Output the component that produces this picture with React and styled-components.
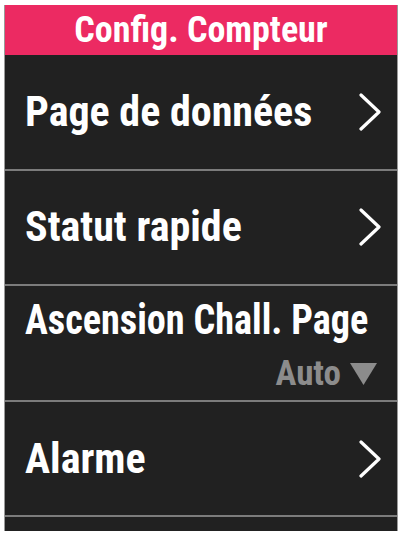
import React from 'react';
import styled, { createGlobalStyle } from 'styled-components';

const GlobalStyle = createGlobalStyle`
  body {
    margin: 0;
    background: #ffffff;
    font-family: "Roboto Condensed", Roboto, sans-serif;
  }
`;

const Screen = styled.div`
  margin: 5px 5px 0 4px;
  width: 394px;
  height: 526px;
  background: #212121;
  border-left: 1px solid #9a9a9a;
  border-right: 1px solid #9a9a9a;
  box-sizing: border-box;
  overflow: hidden;
  display: flex;
  flex-direction: column;
`;

const Header = styled.div`
  height: 50px;
  background: #ec2a62;
  color: #fff;
  font-size: 36px;
  font-weight: 700;
  display: flex;
  align-items: center;
  justify-content: center;
  flex-shrink: 0;
`;

const Row = styled.div`
  height: 115.6px;
  flex-shrink: 0;
  box-sizing: border-box;
  border-bottom: 2px solid #7c7c7c;
  padding: ${p => (p.$stacked ? '10px 20px 0 20px' : '0 16px 0 20px')};
  display: flex;
  flex-direction: ${p => (p.$stacked ? 'column' : 'row')};
  align-items: ${p => (p.$stacked ? 'stretch' : 'center')};
  justify-content: ${p => (p.$stacked ? 'flex-start' : 'space-between')};
  color: #fff;
`;

const Label = styled.div`
  font-size: 42px;
  font-weight: 700;
  line-height: 48px;
  white-space: nowrap;
  transform-origin: left center;
  transform: ${p => (p.$squeeze ? `scaleX(${p.$squeeze})` : 'none')};
`;

const Value = styled.div`
  display: flex;
  align-items: center;
  justify-content: flex-end;
  gap: 9px;
  color: #8c8c8c;
  font-size: 35px;
  font-weight: 700;
  line-height: 40px;
  margin-top: 10px;
`;

const Chevron = () => (
  <svg width="24" height="38" viewBox="0 0 24 38">
    <path d="M4 2 L22 19 L4 36" fill="none" stroke="#fff" strokeWidth="3.2" strokeLinecap="round" strokeLinejoin="round" />
  </svg>
);

const Caret = () => (
  <svg width="27" height="22" viewBox="0 0 27 22">
    <path d="M0 0 H27 L13.5 22 Z" fill="#8c8c8c" />
  </svg>
);

const items = [
  { label: 'Page de données' },
  { label: 'Statut rapide' },
  { label: 'Ascension Chall. Page', value: 'Auto', squeeze: 0.91 },
  { label: 'Alarme' },
];

export default function App() {
  return (
    <>
      <GlobalStyle />
      <Screen>
        <Header>Config. Compteur</Header>
        {items.map(item =>
          item.value ? (
            <Row key={item.label} $stacked>
              <Label $squeeze={item.squeeze}>{item.label}</Label>
              <Value>
                {item.value}
                <Caret />
              </Value>
            </Row>
          ) : (
            <Row key={item.label}>
              <Label>{item.label}</Label>
              <Chevron />
            </Row>
          )
        )}
        <Row />
      </Screen>
    </>
  );
}
